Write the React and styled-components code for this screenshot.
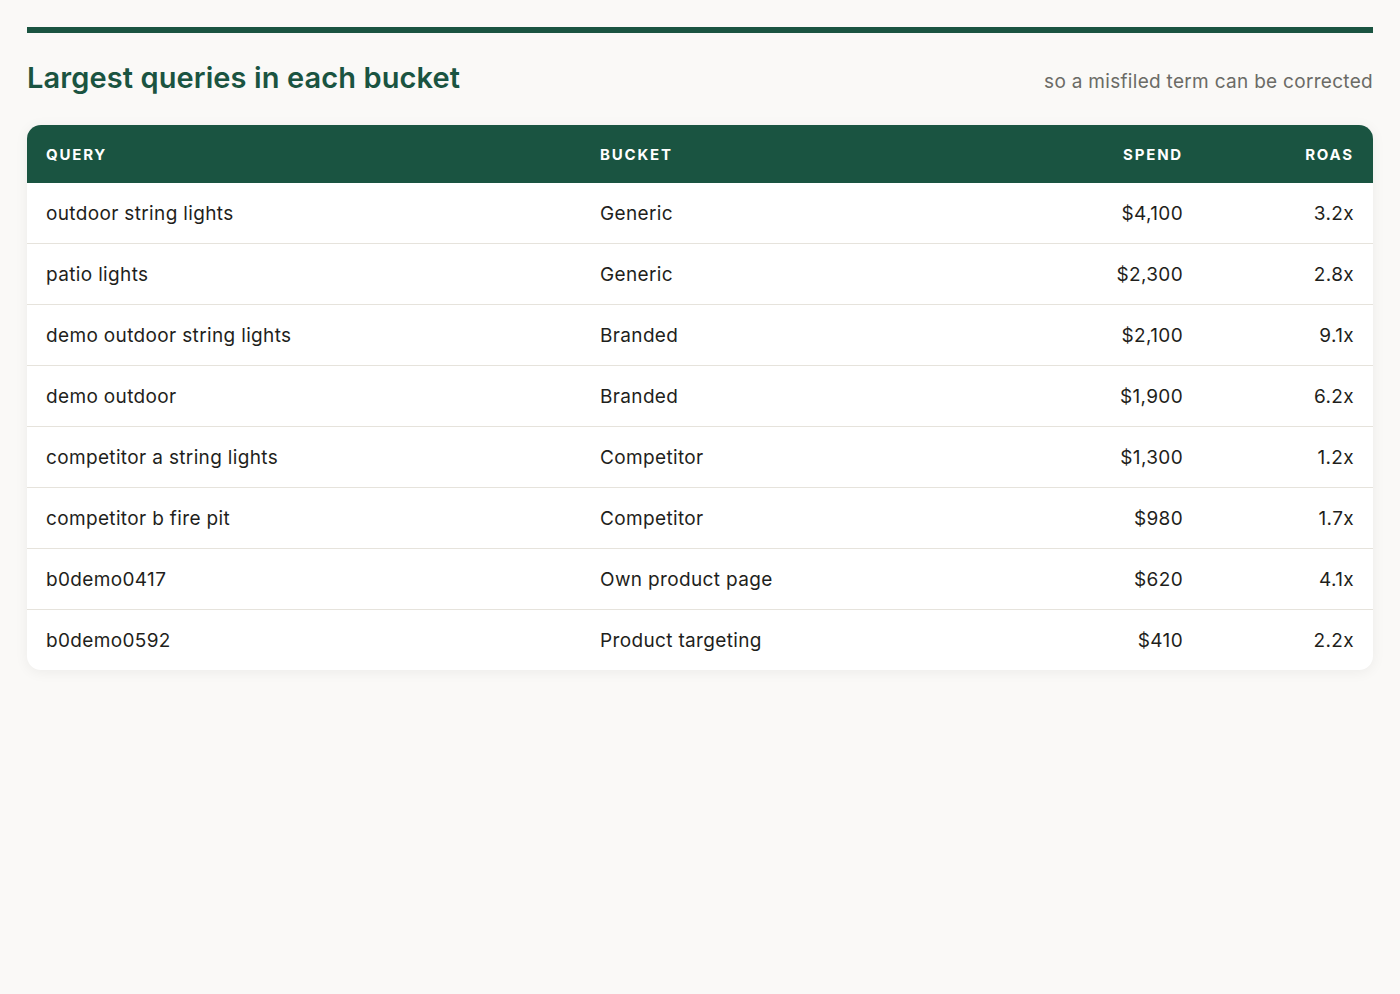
import styled, { createGlobalStyle } from "styled-components";

const Global = createGlobalStyle`
body { margin: 0; background: #faf9f7; font-family: Inter, "Noto Sans", sans-serif; }
`
const Page = styled.div`
padding: 27px 27px 27px 27px;
`
const TopBar = styled.div`
height: 6px;
background: #1a5441;
`
const Header = styled.div`
display: flex;
justify-content: space-between;
align-items: baseline;
margin: 27px 0 29px;
`
const Title = styled.h2`
margin: 0;
font-size: 29px;
font-weight: 600;
color: #1a5441;
letter-spacing: 0.1px;
line-height: 36px;
`
const Note = styled.span`
font-size: 19px;
color: #6b6b66;
letter-spacing: 0.3px;
`
const Card = styled.div`
background: #fff;
border-radius: 14px;
overflow: hidden;
box-shadow: 0 2px 14px rgba(0, 0, 0, 0.06);
`
const Table = styled.table`
width: 100%;
border-collapse: collapse;
table-layout: fixed;
`
const Th = styled.th`
background: #1a5441;
color: #fff;
height: 58px;
padding: 0 19px;
font-size: 15px;
font-weight: 700;
letter-spacing: 1.8px;
text-align: ${p => (p.$right ? "right" : "left")};
`
const Td = styled.td`
height: 60px;
padding: 0 19px;
font-size: 19px;
letter-spacing: 0.35px;
color: #1f1f1c;
text-align: ${p => (p.$right ? "right" : "left")};
`
const Row = styled.tr`
& + & td { border-top: 1px solid #e6e3dc; }
`

const rows = [
  ["outdoor string lights", "Generic", "$4,100", "3.2x"],
  ["patio lights", "Generic", "$2,300", "2.8x"],
  ["demo outdoor string lights", "Branded", "$2,100", "9.1x"],
  ["demo outdoor", "Branded", "$1,900", "6.2x"],
  ["competitor a string lights", "Competitor", "$1,300", "1.2x"],
  ["competitor b fire pit", "Competitor", "$980", "1.7x"],
  ["b0demo0417", "Own product page", "$620", "4.1x"],
  ["b0demo0592", "Product targeting", "$410", "2.2x"],
];

export default function App() {
  return (
    <Page>
      <Global />
      <TopBar />
      <Header>
        <Title>Largest queries in each bucket</Title>
        <Note>so a misfiled term can be corrected</Note>
      </Header>
      <Card>
        <Table>
          <colgroup>
            <col style={{ width: 554 }} />
            <col style={{ width: 451 }} />
            <col style={{ width: 170 }} />
            <col style={{ width: 171 }} />
          </colgroup>
          <thead>
            <tr>
              <Th>QUERY</Th>
              <Th>BUCKET</Th>
              <Th $right>SPEND</Th>
              <Th $right>ROAS</Th>
            </tr>
          </thead>
          <tbody>
            {rows.map(r => (
              <Row key={r[0]}>
                <Td>{r[0]}</Td>
                <Td>{r[1]}</Td>
                <Td $right>{r[2]}</Td>
                <Td $right>{r[3]}</Td>
              </Row>
            ))}
          </tbody>
        </Table>
      </Card>
    </Page>
  );
}
